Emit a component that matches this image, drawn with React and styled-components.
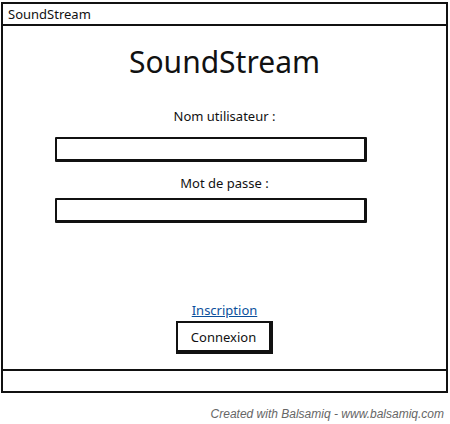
import React from "react";
import styled, { createGlobalStyle } from "styled-components";

const GlobalStyle = createGlobalStyle`
  body {
    margin: 0;
    background: #fff;
    font-family: "Noto Sans", "Open Sans", sans-serif;
    color: #111;
  }
`;

export default function App() {
  return (
    <Page>
      <GlobalStyle />
      <Window>
        <TitleBar>SoundStream</TitleBar>
        <Content>
          <Heading>SoundStream</Heading>
          <Label $top={25}>Nom utilisateur :</Label>
          <Field type="text" $top={12} />
          <Label $top={12}>Mot de passe :</Label>
          <Field type="password" $top={6} />
          <Spacer />
          <Link href="#">Inscription</Link>
          <Button>Connexion</Button>
        </Content>
        <StatusBar />
      </Window>
      <Credit>Created with Balsamiq - www.balsamiq.com</Credit>
    </Page>
  );
}

const Page = styled.div`
  width: 450px;
  height: 424px;
  padding-top: 2px;
  box-sizing: border-box;
`;

const Window = styled.div`
  margin-left: 1px;
  width: 447px;
  height: 391px;
  box-sizing: border-box;
  border: 2px solid #111;
  display: flex;
  flex-direction: column;
`;

const TitleBar = styled.div`
  height: 20px;
  border-bottom: 2px solid #111;
  padding-left: 5px;
  font-size: 13px;
  line-height: 20px;
`;

const Content = styled.div`
  flex: 1;
  display: flex;
  flex-direction: column;
  align-items: center;
`;

const Heading = styled.h1`
  margin: 16px 0 0;
  font-size: 30px;
  font-weight: 400;
  line-height: 40px;
`;

const Label = styled.div`
  margin-top: ${(p) => p.$top}px;
  font-size: 13px;
  line-height: 18px;
`;

const Field = styled.input`
  align-self: flex-start;
  margin: ${(p) => p.$top}px 0 0 52px;
  padding: 0;
  width: 312px;
  height: 25px;
  box-sizing: border-box;
  border: 2px solid #111;
  border-right-width: 3px;
  border-bottom-width: 3px;
  border-radius: 1px;
  outline: none;
  background: #fff;
`;

const Spacer = styled.div`
  flex: 1;
`;

const Link = styled.a`
  font-size: 13px;
  line-height: 18px;
  color: #0b4f9c;
  text-decoration: underline;
`;

const Button = styled.button`
  margin: 2px 0 15px 0;
  width: 97px;
  height: 33px;
  box-sizing: border-box;
  border: 2px solid #111;
  border-right-width: 4px;
  border-bottom-width: 4px;
  background: #fff;
  font-family: inherit;
  font-size: 13px;
  color: #111;
`;

const StatusBar = styled.div`
  height: 20px;
  border-top: 2px solid #111;
`;

const Credit = styled.div`
  margin-top: 14px;
  padding-right: 6px;
  text-align: right;
  font-family: "Liberation Sans", Arial, sans-serif;
  font-style: italic;
  font-size: 12px;
  color: #666;
`;
